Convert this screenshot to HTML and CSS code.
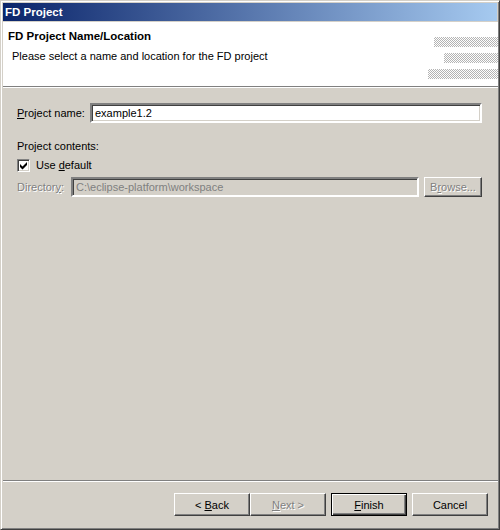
FILE: index.html
```html
<!DOCTYPE html>
<html>
<head>
<meta charset="utf-8">
<link rel="stylesheet" href="styles.css">
</head>
<body>
<div class="window">
  <div class="titlebar">FD Project</div>
  <div class="header">
    <div class="htext">
      <div class="htitle">FD Project Name/Location</div>
      <div class="hdesc">Please select a name and location for the FD project</div>
    </div>
    <div class="banner">
      <div class="hatch b1"></div>
      <div class="hatch b2"></div>
      <div class="hatch b3"></div>
    </div>
  </div>
  <div class="sep"></div>
  <div class="content">
    <div class="row namerow">
      <span class="label"><u>P</u>roject name:</span>
      <div class="field">example1.2</div>
    </div>
    <div class="contents-label">Project contents:</div>
    <div class="row checkrow">
      <span class="checkbox"><svg width="9" height="9" viewBox="0 0 9 9"><path d="M1 3 L3.5 5.5 L8 1 L8 4 L3.5 8.5 L1 6 Z" fill="#000"/></svg></span>
      <span class="cblabel">Use <u>d</u>efault</span>
    </div>
    <div class="row dirrow">
      <span class="label disabled">Director<u>y</u>:</span>
      <div class="field dis">C:\eclipse-platform\workspace</div>
      <div class="btn browse disabled"><span>B<u>r</u>owse...</span></div>
    </div>
  </div>
  <div class="sep"></div>
  <div class="buttons">
    <div class="btn"><span>&lt; <u>B</u>ack</span></div>
    <div class="btn disabled"><span><u>N</u>ext &gt;</span></div>
    <div class="btn default gap"><span><u>F</u>inish</span></div>
    <div class="btn gap"><span>Cancel</span></div>
  </div>
</div>
</body>
</html>
```

FILE: styles.css
```css
html, body {
  margin: 0;
  padding: 0;
  width: 500px;
  height: 530px;
  overflow: hidden;
  background: #d4d0c8;
}

.window {
  box-sizing: border-box;
  width: 500px;
  height: 530px;
  display: flex;
  flex-direction: column;
  background: #d4d0c8;
  border-style: solid;
  border-width: 1px;
  border-color: #d4d0c8 #404040 #404040 #d4d0c8;
  box-shadow: inset 1px 1px 0 #fff, inset -1px -1px 0 #808080;
  padding: 2px;
  font-family: "Liberation Sans", Arial, sans-serif;
  font-size: 11px;
  color: #000;
}

.titlebar {
  height: 18px;
  line-height: 18px;
  padding-left: 2px;
  color: #fff;
  font-weight: bold;
  font-size: 11.5px;
  background: linear-gradient(to right, #0a246a, #a6caf0);
}

.header {
  height: 64px;
  background: #fff;
  display: flex;
  justify-content: space-between;
  margin: 1px -1px 0 0;
}

.htext {
  padding: 6px 0 0 5px;
}

.htitle {
  font-weight: bold;
  font-size: 11.5px;
  height: 16px;
  line-height: 16px;
}

.hdesc {
  margin-top: 4px;
  padding-left: 4px;
  line-height: 16px;
}

.banner {
  display: flex;
  flex-direction: column;
  align-items: flex-end;
  gap: 6px;
  padding-top: 15px;
}

.hatch {
  height: 10px;
  background: repeating-conic-gradient(#b4b4b4 0 25%, #ffffff 0 50%) 0 0 / 2px 2px;
}
.b1 { width: 64px; }
.b2 { width: 54px; }
.b3 { width: 70px; }

.sep {
  height: 1px;
  border-top: 1px solid #808080;
  background: #fff;
  margin-right: -1px;
}

.content {
  flex: 1;
  padding: 15px 15px 0 14px;
}

.row {
  display: flex;
  align-items: center;
}

.label {
  width: 73px;
  flex: none;
}

.field {
  box-sizing: border-box;
  flex: 1;
  height: 20px;
  line-height: 16px;
  padding: 0 3px;
  background: #fff;
  border: 2px solid;
  border-color: #808080 #fff #fff #808080;
  box-shadow: inset 1px 1px 0 #404040, inset -1px -1px 0 #d4d0c8;
  white-space: nowrap;
}

.field.dis {
  background: #d4d0c8;
  color: #808080;
}

.contents-label {
  margin-top: 15px;
  line-height: 16px;
}

.checkrow {
  margin-top: 3px;
  height: 16px;
}

.checkbox {
  box-sizing: border-box;
  width: 13px;
  height: 13px;
  background: #fff;
  border: 1px solid;
  border-color: #808080 #fff #fff #808080;
  box-shadow: inset 1px 1px 0 #404040, inset -1px -1px 0 #d4d0c8;
  display: flex;
  align-items: center;
  justify-content: center;
}

.checkbox svg { display: block; }

.cblabel {
  margin-left: 6px;
}

.dirrow {
  margin-top: 4px;
}

.dirrow .label {
  width: 54px;
}

.disabled {
  color: #808080;
  text-shadow: 1px 1px 0 #fff;
}

.btn {
  box-sizing: border-box;
  width: 76px;
  height: 23px;
  display: flex;
  align-items: center;
  justify-content: center;
  background: #d4d0c8;
  border: 1px solid;
  border-color: #fff #404040 #404040 #fff;
  box-shadow: inset -1px -1px 0 #808080;
  flex: none;
  white-space: pre;
}

.browse {
  width: 58px;
  height: 20px;
  margin-left: 5px;
}

.buttons {
  height: 45px;
  display: flex;
  justify-content: flex-end;
  align-items: flex-start;
  padding: 11px 9px 0 0;
  box-sizing: border-box;
}

.buttons .gap {
  margin-left: 5px;
}

.btn.default {
  border: 1px solid #000;
  box-shadow: inset 1px 1px 0 #fff, inset -1px -1px 0 #404040, inset -2px -2px 0 #808080;
}
```
